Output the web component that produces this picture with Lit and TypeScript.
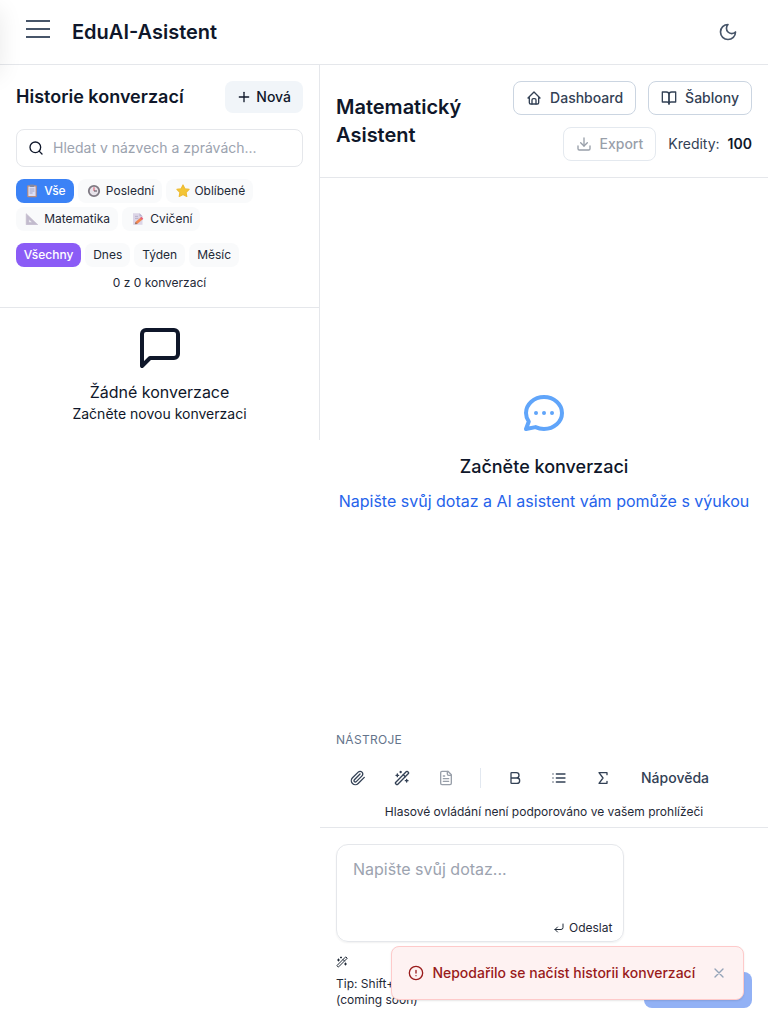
import { LitElement, html, css, svg } from "lit";
import { customElement } from "lit/decorators.js";

const glyphs: Record<string, string[]> = {
  plus: ["M5 12h14", "M12 5v14"],
  search: ["M19 11a8 8 0 1 1-16 0 8 8 0 0 1 16 0Z", "m21 21-4.3-4.3"],
  moon: ["M12 3a6 6 0 0 0 9 9 9 9 0 1 1-9-9Z"],
  message: ["M21 15a2 2 0 0 1-2 2H7l-4 4V5a2 2 0 0 1 2-2h14a2 2 0 0 1 2 2z"],
  chat: ["M8 12h.01M12 12h.01M16 12h.01M21 12c0 4.418-4.03 8-9 8a9.863 9.863 0 01-4.255-.949L3 20l1.395-3.72C3.512 15.042 3 13.574 3 12c0-4.418 4.03-8 9-8s9 3.582 9 8z"],
  home: ["M5 12H3l9-9 9 9h-2", "M5 12v7a2 2 0 0 0 2 2h10a2 2 0 0 0 2-2v-7", "M9 21v-6a2 2 0 0 1 2-2h2a2 2 0 0 1 2 2v6"],
  book: ["M2 3h6a4 4 0 0 1 4 4v14a3 3 0 0 0-3-3H2z", "M22 3h-6a4 4 0 0 0-4 4v14a3 3 0 0 1 3-3h7z"],
  download: ["M21 15v4a2 2 0 0 1-2 2H5a2 2 0 0 1-2-2v-4", "m7 10 5 5 5-5", "M12 15V3"],
  clip: ["m21.44 11.05-9.19 9.19a6 6 0 0 1-8.49-8.49l8.57-8.57A4 4 0 1 1 18 8.84l-8.59 8.57a2 2 0 0 1-2.83-2.83l8.49-8.48"],
  wand: ["m21.64 3.64-1.28-1.28a1.21 1.21 0 0 0-1.72 0L2.36 18.64a1.21 1.21 0 0 0 0 1.72l1.28 1.28a1.2 1.2 0 0 0 1.72 0L21.64 5.36a1.2 1.2 0 0 0 0-1.72Z", "m14 7 3 3", "M5 6v4M19 14v4M10 2v2M7 8H3M21 16h-4M11 3H9"],
  file: ["M15 2H6a2 2 0 0 0-2 2v16a2 2 0 0 0 2 2h12a2 2 0 0 0 2-2V7Z", "M14 2v4a2 2 0 0 0 2 2h4", "M10 9H8M16 13H8M16 17H8"],
  bold: ["M6 12h9a4 4 0 0 1 0 8H7a1 1 0 0 1-1-1V5a1 1 0 0 1 1-1h7a4 4 0 0 1 0 8"],
  list: ["M3 12h.01M3 18h.01M3 6h.01M8 12h13M8 18h13M8 6h13"],
  sigma: ["M18 7V4H6l6 8-6 8h12v-3"],
  enter: ["M9 10l-5 5 5 5", "M20 4v7a4 4 0 0 1-4 4H4"],
  alert: ["M22 12a10 10 0 1 1-20 0 10 10 0 0 1 20 0Z", "M12 8v4M12 16h.01"],
  close: ["M18 6 6 18M6 6l12 12"],
};

const icon = (name: string, size: number, stroke = 2) => html`
  <svg class="icon" width=${size} height=${size} viewBox="0 0 24 24" fill="none"
    stroke="currentColor" stroke-width=${stroke} stroke-linecap="round" stroke-linejoin="round">
    ${glyphs[name].map((d) => svg`<path d=${d}></path>`)}
  </svg>`;

// Small coloured pictograms on a 14-unit grid.
const pictures: Record<string, unknown> = {
  clipboard: svg`<rect x="2.2" y="1.2" width="9.6" height="12" rx="1" fill="#c98f72"></rect>
    <rect x="3.4" y="2.6" width="7.2" height="9.4" fill="#eeeaf6"></rect>
    <rect x="4.8" y=".5" width="4.4" height="2.6" rx=".8" fill="#8d8a99"></rect>
    <path d="M4.6 5h4.8M4.6 7h4.8M4.6 9h3" stroke="#a7a2bd" stroke-width=".9"></path>`,
  clock: svg`<circle cx="7" cy="7" r="5.2" fill="#e6e1e9" stroke="#716c76" stroke-width="1.8"></circle>
    <path d="M7 3.2V7" stroke="#df4f62" stroke-width="1.1"></path><path d="M7 7h3" stroke="#4b4650" stroke-width="1.1"></path>`,
  star: svg`<path d="M7 .9 8.9 4.7l4.2.6-3 3 .7 4.2L7 10.5l-3.8 2 .7-4.2-3-3 4.2-.6Z" fill="#f3c021" stroke="#ecb41c" stroke-width="1.1" stroke-linejoin="round"></path>`,
  ruler: svg`<path d="M1.2 1.7v11h11.6Zm2.7 5.6 3.3 3.2H3.9Z" fill="#bdb5c9" fill-rule="evenodd" stroke="#bdb5c9" stroke-width=".6" stroke-linejoin="round"></path>`,
  memo: svg`<path d="M2 1.2h6.5l3 3v8.6H2Z" fill="#d9d1e5"></path><path d="M8.5 1.2v3h3Z" fill="#b4a9c8"></path>
    <path d="M4 4.4h3M4 6.4h3.4" stroke="#aaa0bd" stroke-width=".8"></path>
    <path d="m5 11.2 5.6-4.8" stroke="#f37a3d" stroke-width="2.7"></path><path d="m10 6.9 1.4-1.2" stroke="#e6506b" stroke-width="2.7"></path>
    <path d="m3.7 12.3 1-2.2 1.6 1.9Z" fill="#8a6252"></path>`,
};

@customElement("app-root")
export class AppRoot extends LitElement {
  static styles = css`
    :host { display: block; position: relative; height: 1025px; overflow: hidden; background: #fff; color: #0f172a;
      font-family: Inter, sans-serif; font-size: 16px; line-height: 24px; }
    * { box-sizing: border-box; }
    .icon { display: block; flex: none; }
    h1, h2, h3, p { margin: 0; }
    .drawer { position: absolute; left: -256px; top: 0; width: 256px; height: 64px; box-shadow: 0 10px 25px rgba(0,0,0,.09); }
    .top { height: 65px; border-bottom: 1px solid #e5e7eb; display: flex; align-items: center; padding: 0 30px 0 26px; }
    .burger { width: 24px; height: 18px; margin: 0 22px 6px 0; display: flex; flex-direction: column; justify-content: space-between; }
    .bar { height: 2px; background: #475569; }
    .brand { font-size: 20px; line-height: 28px; font-weight: 600; flex: 1; }
    .moon { color: #475569; }
    .cols { display: flex; align-items: flex-start; height: 959px; }
    .side { width: 320px; height: 375px; border-right: 1px solid #e5e7eb; flex: none; }
    .filters { padding: 16px 16px 0; height: 243px; border-bottom: 1px solid #e5e7eb; }
    .row { display: flex; align-items: center; justify-content: space-between; }
    .row h2 { font-size: 18px; line-height: 28px; font-weight: 600; }
    .new { height: 32px; border-radius: 8px; background: #f1f5f9; font-size: 14px; font-weight: 500;
      display: flex; align-items: center; padding: 0 12px 0 11px; gap: 4px; }
    .search { margin-top: 16px; height: 38px; border: 1px solid #e5e7eb; border-radius: 8px; display: flex; align-items: center;
      gap: 9px; padding: 0 11px; font-size: 14px; color: #9ca3af; }
    .search .icon { color: #0f172a; }
    .chips { display: flex; flex-wrap: wrap; gap: 4px; margin-top: 12px; font-size: 12px; line-height: 16px; }
    .chip { height: 24px; padding: 4px 8px; border-radius: 8px; background: #f9fafb; color: #1f2937; white-space: nowrap; display: flex; align-items: center; }
    .pic { display: block; width: 14px; height: 14px; margin: 0 4.8px 0 1.4px; opacity: .9; }
    .blue { background: #3b82f6; color: #fff; font-weight: 500; }
    .violet { background: #8b5cf6; color: #fff; font-weight: 500; padding: 4px 7.8px; }
    .count { margin-top: 8px; text-align: center; font-size: 12px; line-height: 16px; color: #1f2937; }
    .none { display: flex; flex-direction: column; align-items: center; padding-top: 16px; }
    .none .t { margin-top: 8px; }
    .none .s { font-size: 14px; line-height: 20px; }
    .main { flex: 1; height: 959px; display: flex; flex-direction: column; min-width: 0; }
    .head { height: 113px; border-bottom: 1px solid #e5e7eb; padding: 16px; display: flex; align-items: center; justify-content: space-between; }
    .head h1 { font-size: 20px; line-height: 28px; font-weight: 600; width: 140px; }
    .acts { display: flex; flex-wrap: wrap; justify-content: flex-end; gap: 12px; width: 260px; font-size: 14px; color: #334155; }
    .btn { height: 34px; border: 1px solid #cbd5e1; border-radius: 8px; padding: 0 12px; display: flex; align-items: center; gap: 8px; font-weight: 500; }
    .off { opacity: .5; }
    .cred { height: 34px; display: flex; align-items: center; gap: 8px; }
    .cred b { font-weight: 600; color: #0f172a; }
    .empty { flex: 1; display: flex; flex-direction: column; align-items: center; padding-top: 211px; }
    .empty .icon { color: #60a5fa; }
    .empty h3 { margin-top: 16px; font-size: 18px; line-height: 28px; font-weight: 500; }
    .empty p { margin-top: 8px; color: #2563eb; }
    .tools { height: 97px; border-bottom: 1px solid #e5e7eb; padding: 1px 16px 0; }
    .label { font-size: 12px; line-height: 16px; color: #64748b; letter-spacing: .3px; }
    .bar-row { display: flex; align-items: center; height: 36px; margin-top: 12px; color: #334155; }
    .tool { width: 44px; display: flex; justify-content: center; }
    .sep { width: 1px; height: 20px; margin: 0 12px; background: #e2e8f0; }
    .help { padding: 0 16px; font-size: 14px; font-weight: 500; }
    .note { margin-top: 8px; text-align: center; font-size: 12px; line-height: 16px; color: #1f2937; }
    .composer { height: 196px; padding: 16px; display: grid; grid-template-columns: 288.4px 107.6px; justify-content: space-between; }
    .field { height: 98px; border: 1px solid #e5e7eb; border-radius: 12px; box-shadow: 0 1px 2px rgba(0,0,0,.06); padding: 12px 11px 5px 16px;
      display: flex; flex-direction: column; justify-content: space-between; color: #9ca3af; }
    .send { align-self: flex-end; display: flex; align-items: center; gap: 4px; font-size: 12px; line-height: 16px; color: #1f2937; }
    .tip { font-size: 12px; line-height: 16px; color: #1f2937; }
    .tip .icon { margin: 14px 0 8px; }
    .submit { align-self: end; height: 36px; border-radius: 8px; background: #92b1f5; }
    .toast { position: absolute; left: 391.4px; top: 946px; width: 352.6px; height: 54px; border: 1px solid #fecaca; border-radius: 8px;
      background: #fef2f2; color: #991b1b; box-shadow: 0 1px 2px rgba(0,0,0,.1); display: flex; align-items: center; padding: 0 16px; font-size: 14px; font-weight: 500; }
    .toast span { margin-left: 8px; flex: 1; white-space: nowrap; }
    .x { color: #94a3b8; }
  `;

  private chip(label: string, picture = "", tone = "") {
    return html`<span class="chip ${tone}">${picture ? html`<svg class="pic" viewBox="0 0 14 14" fill="none">${pictures[picture]}</svg>` : ""}${label}</span>`;
  }

  render() {
    return html`
      <header class="top">
        <div class="burger"><div class="bar"></div><div class="bar"></div><div class="bar"></div></div>
        <div class="brand">EduAI-Asistent</div>
        <div class="moon">${icon("moon", 20)}</div>
      </header>
      <div class="drawer"></div>
      <div class="cols">
        <aside class="side">
          <div class="filters">
            <div class="row"><h2>Historie konverzací</h2><div class="new">${icon("plus", 16)}Nová</div></div>
            <div class="search">${icon("search", 16)}<span>Hledat v názvech a zprávách...</span></div>
            <div class="chips">
              ${this.chip("Vše", "clipboard", "blue")}${this.chip("Poslední", "clock")}${this.chip("Oblíbené", "star")}
              ${this.chip("Matematika", "ruler")}${this.chip("Cvičení", "memo")}
            </div>
            <div class="chips">
              ${this.chip("Všechny", "", "violet")}${this.chip("Dnes")}${this.chip("Týden")}${this.chip("Měsíc")}
            </div>
            <div class="count">0 z 0 konverzací</div>
          </div>
          <div class="none">
            ${icon("message", 48)}
            <p class="t">Žádné konverzace</p>
            <p class="s">Začněte novou konverzaci</p>
          </div>
        </aside>
        <main class="main">
          <div class="head">
            <h1>Matematický Asistent</h1>
            <div class="acts">
              <div class="btn">${icon("home", 16)}<span>Dashboard</span></div>
              <div class="btn">${icon("book", 16)}<span>Šablony</span></div>
              <div class="btn off">${icon("download", 16)}<span>Export</span></div>
              <div class="cred"><span>Kredity:</span><b>100</b></div>
            </div>
          </div>
          <div class="empty">
            ${icon("chat", 48)}
            <h3>Začněte konverzaci</h3>
            <p>Napište svůj dotaz a AI asistent vám pomůže s výukou</p>
          </div>
          <div class="tools">
            <div class="label">NÁSTROJE</div>
            <div class="bar-row">
              <div class="tool">${icon("clip", 16)}</div>
              <div class="tool">${icon("wand", 16)}</div>
              <div class="tool off">${icon("file", 16)}</div>
              <div class="sep"></div>
              <div class="tool">${icon("bold", 16)}</div>
              <div class="tool">${icon("list", 16)}</div>
              <div class="tool">${icon("sigma", 16)}</div>
              <div class="help">Nápověda</div>
            </div>
            <div class="note">Hlasové ovládání není podporováno ve vašem prohlížeči</div>
          </div>
          <div class="composer">
            <div>
              <div class="field"><span>Napište svůj dotaz...</span><div class="send">${icon("enter", 12)}Odeslat</div></div>
              <div class="tip">${icon("wand", 12)}Tip: Shift+<br>(coming soon)</div>
            </div>
            <div class="submit"></div>
          </div>
        </main>
      </div>
      <div class="toast">${icon("alert", 16)}<span>Nepodařilo se načíst historii konverzací</span><div class="x">${icon("close", 16)}</div></div>
    `;
  }
}
